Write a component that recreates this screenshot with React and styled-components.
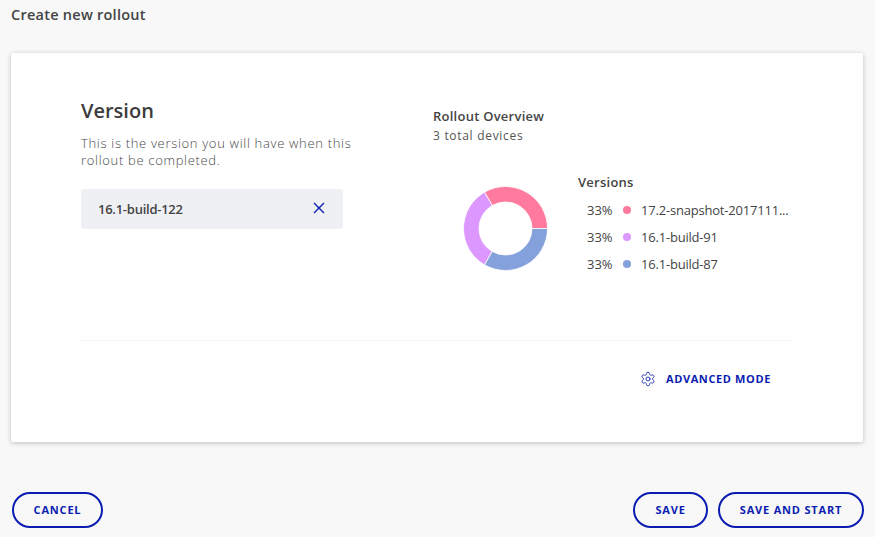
import React from "react";
import styled, { createGlobalStyle } from "styled-components";

const GlobalStyle = createGlobalStyle`
  html, body {
    margin: 0;
    padding: 0;
    background: #f8f8f8;
    font-family: "Open Sans", "Noto Sans", sans-serif;
  }
`;

const Page = styled.div`
  width: 875px;
  height: 537px;
  overflow: hidden;
  box-sizing: border-box;
  padding: 6px 12px 0 11px;
`;

const PageTitle = styled.h1`
  margin: 0 0 27px;
  height: 20px;
  line-height: 18px;
  font-size: 14.5px;
  letter-spacing: 0.25px;
  font-weight: 600;
  color: #444;
`;

const Card = styled.section`
  height: 389px;
  box-sizing: border-box;
  padding: 44px 69px 0 70px;
  background: #fff;
  border-radius: 2px;
  box-shadow: 0 1px 5px rgba(0, 0, 0, 0.24);
`;

const Columns = styled.div`
  display: flex;
  height: 243px;
  border-bottom: 1px solid #f5f5f5;
`;

const LeftColumn = styled.div`
  width: 352px;
`;

const Heading = styled.h2`
  margin: 0 0 11px;
  line-height: 27px;
  font-size: 20px;
  font-weight: 600;
  color: #3c3c3c;
`;

const Description = styled.p`
  margin: 0 0 20px;
  width: 285px;
  font-size: 13px;
  line-height: 17px;
  letter-spacing: 0.68px;
  font-weight: 300;
  color: #484848;
`;

const VersionField = styled.div`
  width: 262px;
  height: 40px;
  box-sizing: border-box;
  padding: 0 17px;
  display: flex;
  align-items: center;
  justify-content: space-between;
  background: #eff0f4;
  border-radius: 3px;
  font-size: 13px;
  letter-spacing: -0.25px;
  font-weight: 600;
  color: #444;
`;

const ClearIcon = styled.svg`
  width: 12px;
  height: 12px;
  margin: -3px 1px 0 0;
  fill: none;
  stroke: #0a1db0;
  stroke-width: 1.4;
`;

const Overview = styled.div`
  padding-top: 10px;
`;

const OverviewTitle = styled.h3`
  margin: 0;
  font-size: 13px;
  letter-spacing: 0.25px;
  line-height: 18px;
  font-weight: 600;
  color: #444;
`;

const OverviewCount = styled.div`
  margin-top: 2px;
  font-size: 12px;
  line-height: 18px;
  letter-spacing: 0.7px;
  color: #555;
`;

const ChartRow = styled.div`
  display: flex;
  margin-top: 28px;
  padding-left: 30px;
`;

const Donut = styled.svg`
  width: 85px;
  height: 85px;
  margin-top: 13px;
  flex: none;
`;

const Legend = styled.div`
  margin-left: 30px;
`;

const LegendTitle = styled.div`
  font-size: 13px;
  letter-spacing: 0.25px;
  line-height: 18px;
  font-weight: 600;
  color: #444;
  margin-bottom: 5px;
`;

const LegendRow = styled.div`
  display: flex;
  align-items: center;
  height: 27px;
  padding-left: 9px;
  font-size: 13px;
  color: #444;
`;

const Percent = styled.span`
  width: 36px;
`;

const Dot = styled.span`
  width: 8px;
  height: 8px;
  border-radius: 50%;
  background: ${(p) => p.$color};
  margin-right: 10px;
`;

const LegendLabel = styled.span`
  white-space: nowrap;
  letter-spacing: -0.2px;
`;

const Actions = styled.div`
  display: flex;
  justify-content: flex-end;
  padding: 29px 23px 0 0;
`;

const AdvancedButton = styled.button`
  display: flex;
  align-items: center;
  gap: 10px;
  padding: 0;
  border: 0;
  background: none;
  color: #0a1db0;
  font: 700 11px "Open Sans", sans-serif;
  letter-spacing: 0.62px;
  line-height: 18px;
`;

const GearIcon = styled.svg`
  width: 16px;
  height: 16px;
  fill: none;
  stroke: #2a3cb8;
  stroke-width: 1.5;
  stroke-linecap: round;
  stroke-linejoin: round;
`;

const Footer = styled.footer`
  display: flex;
  justify-content: space-between;
  margin: 50px -1px 0 1px;
`;

const ButtonGroup = styled.div`
  display: flex;
  gap: 10px;
`;

const PillButton = styled.button`
  width: ${(p) => p.$width}px;
  height: 36px;
  padding: 0 0 2px;
  box-sizing: border-box;
  border: 2px solid #0a1db0;
  border-radius: 18px;
  background: transparent;
  color: #0a1db0;
  font: 700 11px "Open Sans", sans-serif;
  letter-spacing: 0.82px;
`;

const segments = [
  { color: "#ff7a9c", from: 0, to: -120 },
  { color: "#dc98ff", from: -120, to: -240 },
  { color: "#84a1dc", from: -240, to: -360 },
];

const arcPath = (from, to) => {
  const point = (radius, angle) => {
    const rad = (angle * Math.PI) / 180;
    return `${(42.5 + radius * Math.cos(rad)).toFixed(2)} ${(42.5 + radius * Math.sin(rad)).toFixed(2)}`;
  };
  return `M${point(42, from)} A42 42 0 0 0 ${point(42, to)} L${point(26.5, to)} A26.5 26.5 0 0 1 ${point(26.5, from)} Z`;
};

const versions = [
  { label: "17.2-snapshot-2017111...", color: "#ff7a9c" },
  { label: "16.1-build-91", color: "#dc98ff" },
  { label: "16.1-build-87", color: "#84a1dc" },
];

export default function App() {
  return (
    <Page>
      <GlobalStyle />
      <PageTitle>Create new rollout</PageTitle>
      <Card>
        <Columns>
          <LeftColumn>
            <Heading>Version</Heading>
            <Description>
              This is the version you will have when this rollout be completed.
            </Description>
            <VersionField>
              16.1-build-122
              <ClearIcon viewBox="0 0 12 12">
                <path d="M1 1l10 10M11 1L1 11" />
              </ClearIcon>
            </VersionField>
          </LeftColumn>
          <Overview>
            <OverviewTitle>Rollout Overview</OverviewTitle>
            <OverviewCount>3 total devices</OverviewCount>
            <ChartRow>
              <Donut viewBox="0 0 85 85">
                {segments.map((s) => (
                  <path key={s.color} d={arcPath(s.from, s.to)} fill={s.color} stroke="#fff" strokeWidth="0.8" />
                ))}
              </Donut>
              <Legend>
                <LegendTitle>Versions</LegendTitle>
                {versions.map((v) => (
                  <LegendRow key={v.label}>
                    <Percent>33%</Percent>
                    <Dot $color={v.color} />
                    <LegendLabel>{v.label}</LegendLabel>
                  </LegendRow>
                ))}
              </Legend>
            </ChartRow>
          </Overview>
        </Columns>
        <Actions>
          <AdvancedButton>
            <GearIcon viewBox="0 0 24 24">
              <path d="M12.22 2h-.44a2 2 0 0 0-2 2v.18a2 2 0 0 1-1 1.73l-.43.25a2 2 0 0 1-2 0l-.15-.08a2 2 0 0 0-2.73.73l-.22.38a2 2 0 0 0 .73 2.73l.15.1a2 2 0 0 1 1 1.72v.51a2 2 0 0 1-1 1.74l-.15.09a2 2 0 0 0-.73 2.73l.22.38a2 2 0 0 0 2.73.73l.15-.08a2 2 0 0 1 2 0l.43.25a2 2 0 0 1 1 1.73V20a2 2 0 0 0 2 2h.44a2 2 0 0 0 2-2v-.18a2 2 0 0 1 1-1.73l.43-.25a2 2 0 0 1 2 0l.15.08a2 2 0 0 0 2.73-.73l.22-.39a2 2 0 0 0-.73-2.73l-.15-.08a2 2 0 0 1-1-1.74v-.5a2 2 0 0 1 1-1.74l.15-.09a2 2 0 0 0 .73-2.73l-.22-.38a2 2 0 0 0-2.73-.73l-.15.08a2 2 0 0 1-2 0l-.43-.25a2 2 0 0 1-1-1.73V4a2 2 0 0 0-2-2z" />
              <circle cx="12" cy="12" r="3" />
            </GearIcon>
            ADVANCED MODE
          </AdvancedButton>
        </Actions>
      </Card>
      <Footer>
        <PillButton $width={91}>CANCEL</PillButton>
        <ButtonGroup>
          <PillButton $width={75}>SAVE</PillButton>
          <PillButton $width={146}>SAVE AND START</PillButton>
        </ButtonGroup>
      </Footer>
    </Page>
  );
}
